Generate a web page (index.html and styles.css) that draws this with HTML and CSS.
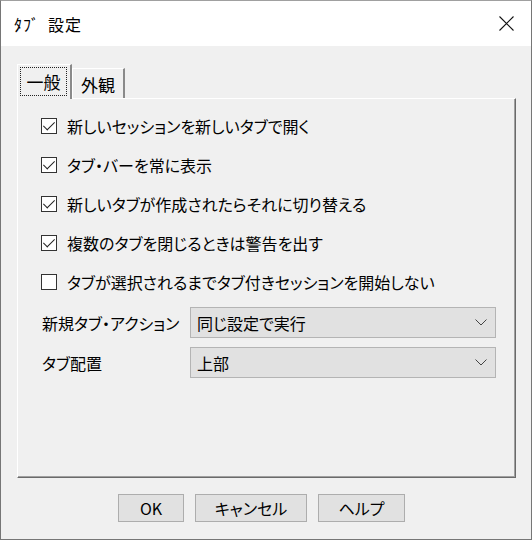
FILE: index.html
```html
<!DOCTYPE html>
<html lang="ja">
<head>
    <meta charset="UTF-8">
    <title>ﾀﾌﾞ設定</title>
    <link rel="stylesheet" href="styles.css">
</head>
<body>
    <div class="window">
        <div class="titlebar">
            <span class="title"><span class="title-kana">ﾀﾌﾞ</span>設定</span>
            <svg class="close" width="15" height="15" viewBox="0 0 15 15">
                <path d="M0.5 0.5 L14.5 14.5 M14.5 0.5 L0.5 14.5" stroke="#111" stroke-width="1.1" fill="none"/>
            </svg>
        </div>

        <div class="content">
            <div class="tabs">
                <div class="tab active"><span class="focus">一般</span></div>
                <div class="tab">外観</div>
            </div>

            <div class="panel">
                <div class="checks">
                    <label class="check"><span class="box checked"></span>新しいセッションを新しいタブで開く</label>
                    <label class="check"><span class="box checked"></span>タブ・バーを常に表示</label>
                    <label class="check"><span class="box checked"></span>新しいタブが作成されたらそれに切り替える</label>
                    <label class="check"><span class="box checked"></span>複数のタブを閉じるときは警告を出す</label>
                    <label class="check"><span class="box"></span>タブが選択されるまでタブ付きセッションを開始しない</label>
                </div>

                <div class="fields">
                    <div class="field">
                        <span class="field-label">新規タブ・アクション</span>
                        <div class="select">同じ設定で実行<svg class="chevron" width="12" height="7" viewBox="0 0 12 7"><path d="M0.5 0.5 L6 6 L11.5 0.5" stroke="#444" stroke-width="1" fill="none"/></svg></div>
                    </div>
                    <div class="field">
                        <span class="field-label">タブ配置</span>
                        <div class="select">上部<svg class="chevron" width="12" height="7" viewBox="0 0 12 7"><path d="M0.5 0.5 L6 6 L11.5 0.5" stroke="#444" stroke-width="1" fill="none"/></svg></div>
                    </div>
                </div>
            </div>

            <div class="buttons">
                <button class="btn btn-ok">OK</button>
                <button class="btn btn-cancel">キャンセル</button>
                <button class="btn btn-help">ヘルプ</button>
            </div>
        </div>
    </div>
</body>
</html>
```

FILE: styles.css
```css
* {
    box-sizing: border-box;
}

body {
    margin: 0;
    padding: 0;
    font-family: "Noto Sans CJK JP", "Noto Sans", sans-serif;
    font-feature-settings: "palt";
    color: #000;
    background: #f0f0f0;
}

.window {
    width: 532px;
    height: 540px;
    border: 1px solid #767676;
    border-top-color: #a0a0a0;
    background: #f0f0f0;
    display: flex;
    flex-direction: column;
}

.titlebar {
    height: 45px;
    background: #fff;
    display: flex;
    align-items: center;
    justify-content: space-between;
    padding: 0 17px 0 13px;
}

.title {
    font-size: 16px;
    font-feature-settings: normal;
    letter-spacing: 1px;
}

.title-kana {
    margin-right: 8px;
}

.close {
    display: block;
}

.content {
    padding: 18px 0 0 16px;
}

/* tab strip */
.tabs {
    display: flex;
    align-items: flex-end;
    height: 34px;
    position: relative;
    z-index: 1;
}

.tab {
    width: 53px;
    height: 30px;
    font-size: 17px;
    display: flex;
    align-items: center;
    justify-content: center;
    border-top: 1px solid #fff;
    border-left: 1px solid #fff;
    border-right: 2px solid #8a8a8a;
    padding-top: 1px;
}

.tab.active {
    width: 55px;
    height: 35px;
    margin-bottom: -1px;
    background: #f0f0f0;
    padding: 2px 3px 3px 2px;
}

.focus {
    flex: 1;
    height: 100%;
    border: 1px dotted #222;
    display: flex;
    align-items: center;
    justify-content: center;
}

/* panel */
.panel {
    width: 499px;
    height: 380px;
    border-top: 1px solid #fff;
    border-left: 1px solid #fff;
    border-right: 1px solid #6a6a6a;
    border-bottom: 1px solid #6a6a6a;
    box-shadow: inset -1px -1px 0 #a0a0a0;
    padding: 19px 0 0 23px;
}

.checks {
    display: flex;
    flex-direction: column;
    gap: 23px;
}

.check {
    display: flex;
    align-items: center;
    gap: 10px;
    height: 16px;
    font-size: 16px;
    white-space: nowrap;
}

.box {
    width: 16px;
    height: 16px;
    border: 1px solid #333;
    background: #fff;
    position: relative;
    flex: none;
}

.box.checked::after {
    content: "";
    position: absolute;
    left: 4px;
    top: 0px;
    width: 5px;
    height: 10px;
    border-right: 1.5px solid #222;
    border-bottom: 1.5px solid #222;
    transform: rotate(45deg);
}

.fields {
    margin-top: 17px;
    margin-left: 1px;
    display: flex;
    flex-direction: column;
    gap: 9px;
}

.field {
    display: flex;
    align-items: center;
}

.field-label {
    width: 148px;
    font-size: 16px;
    white-space: nowrap;
}

.select {
    width: 306px;
    height: 31px;
    background: #e1e1e1;
    border: 1px solid #b4b4b4;
    font-size: 16px;
    display: flex;
    align-items: center;
    justify-content: space-between;
    padding: 0 8px 0 6px;
}

.chevron {
    display: block;
}

/* dialog buttons */
.buttons {
    display: flex;
    gap: 11px;
    margin-top: 16px;
    padding-left: 101px;
}

.btn {
    height: 28px;
    background: #e1e1e1;
    border: 1px solid #adadad;
    font-family: inherit;
    font-feature-settings: "palt";
    font-size: 16px;
    color: #000;
    padding: 0;
}

.btn-ok {
    width: 66px;
}

.btn-cancel {
    width: 112px;
}

.btn-help {
    width: 87px;
}
```
